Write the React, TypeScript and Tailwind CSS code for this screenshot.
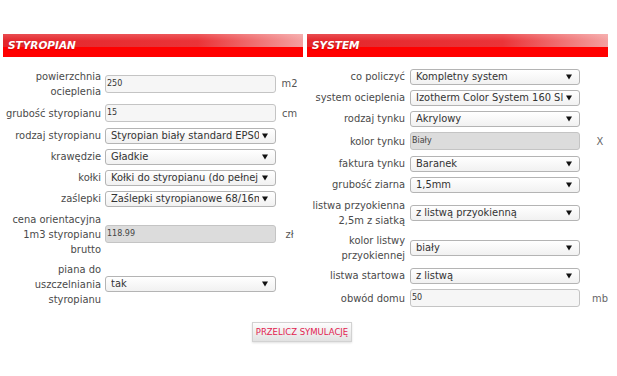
import React from "react";

type Side = "left" | "right";
type Kind = "select" | "input" | "text";

function Arrow() {
  return (
    <svg width="6" height="6" viewBox="0 0 6 6" className="shrink-0">
      <polygon points="0,0.5 6,0.5 3,5.5" fill="#111" />
    </svg>
  );
}

function Select({ value }: { value: string }) {
  return (
    <div className="flex h-[16px] w-full items-center rounded-[3px] border border-[#b4b4b4] bg-[linear-gradient(to_bottom,#ffffff,#f1f1f1)] pl-[5px] pr-[7px]">
      <span className="flex-1 overflow-hidden whitespace-nowrap text-[11px] leading-[14px] text-[#333] font-['DejaVu_Sans_Condensed','DejaVu_Sans',sans-serif]">
        {value}
      </span>
      <span className="ml-[3px] flex items-center">
        <Arrow />
      </span>
    </div>
  );
}

function Input({ value, disabled }: { value: string; disabled?: boolean }) {
  return (
    <div
      className={
        disabled
          ? "flex h-[18px] w-full items-center rounded-[3px] border border-[#c4c4c4] bg-[#dcdcdc] pl-[1px] text-[8px] text-[#444] font-['DejaVu_Sans',sans-serif]"
          : "flex h-[18px] w-full items-center rounded-[3px] border border-[#c4c4c4] bg-[#f6f6f6] pl-[1px] text-[8px] text-[#333] font-['DejaVu_Sans',sans-serif]"
      }
    >
      {value}
    </div>
  );
}

function Row({
  side,
  kind,
  label,
  unit,
  children,
}: {
  side: Side;
  kind: Kind;
  label: React.ReactNode;
  unit?: string;
  children: React.ReactNode;
}) {
  return (
    <div
      className={
        kind === "input"
          ? "flex min-h-[24px] items-center py-[2.5px]"
          : "flex min-h-[21px] items-center py-[2.5px]"
      }
    >
      <div className="w-[98px] shrink-0 text-right text-[11px] leading-[15px] text-[#4a4a4a]">
        {label}
      </div>
      <div className={side === "left" ? "ml-[4px] w-[171px] shrink-0" : "ml-[5px] w-[170px] shrink-0"}>
        {children}
      </div>
      <div
        className={
          side === "left"
            ? "w-[27px] shrink-0 text-center text-[11px] leading-[15px] text-[#555]"
            : "w-[40px] shrink-0 text-center text-[11px] leading-[15px] text-[#666]"
        }
      >
        {unit}
      </div>
    </div>
  );
}

function Header({ title }: { title: string }) {
  return (
    <div className="flex h-[23px] items-center pl-[5px] [background:linear-gradient(to_bottom,rgba(255,255,255,0.18),rgba(255,255,255,0)_30%),linear-gradient(to_bottom,transparent_56%,#ff0000_56%),linear-gradient(to_right,#e4262b_0%,#ea3438_65%,#f4a0a0_100%)]">
      <span className="text-[10.5px] font-bold italic leading-none text-white font-['DejaVu_Sans',sans-serif] [text-shadow:0_1px_1px_rgba(120,0,0,0.35)]">
        {title}
      </span>
    </div>
  );
}

export default function App() {
  return (
    <div className="h-[376px] w-[617px] bg-white pt-[34px] font-['DejaVu_Sans_Condensed','DejaVu_Sans',sans-serif]">
      <div className="flex">
        <div className="ml-[3px] w-[300px] shrink-0">
          <Header title="STYROPIAN" />
          <div className="mt-[9px]">
            <Row side="left" kind="input" label={<>powierzchnia<br />ocieplenia</>} unit="m2">
              <Input value="250" />
            </Row>
            <Row side="left" kind="input" label="grubość styropianu" unit="cm">
              <Input value="15" />
            </Row>
            <Row side="left" kind="select" label="rodzaj styropianu">
              <Select value="Styropian biały standard EPS0" />
            </Row>
            <Row side="left" kind="select" label="krawędzie">
              <Select value="Gładkie" />
            </Row>
            <Row side="left" kind="select" label="kołki">
              <Select value="Kołki do styropianu (do pełnej" />
            </Row>
            <Row side="left" kind="select" label="zaślepki">
              <Select value="Zaślepki styropianowe 68/16m" />
            </Row>
            <Row side="left" kind="input" label={<>cena orientacyjna<br />1m3 styropianu<br />brutto</>} unit="zł">
              <Input value="118.99" disabled />
            </Row>
            <Row side="left" kind="select" label={<>piana do<br />uszczelniania<br />styropianu</>}>
              <Select value="tak" />
            </Row>
          </div>
        </div>
        <div className="ml-[4px] w-[301px] shrink-0">
          <Header title="SYSTEM" />
          <div className="mt-[9px]">
            <Row side="right" kind="select" label="co policzyć">
              <Select value="Kompletny system" />
            </Row>
            <Row side="right" kind="select" label="system ocieplenia">
              <Select value="Izotherm Color System 160 Sl" />
            </Row>
            <Row side="right" kind="select" label="rodzaj tynku">
              <Select value="Akrylowy" />
            </Row>
            <Row side="right" kind="input" label="kolor tynku" unit="X">
              <Input value="Biały" disabled />
            </Row>
            <Row side="right" kind="select" label="faktura tynku">
              <Select value="Baranek" />
            </Row>
            <Row side="right" kind="select" label="grubość ziarna">
              <Select value="1,5mm" />
            </Row>
            <Row side="right" kind="select" label={<>listwa przyokienna<br />2,5m z siatką</>}>
              <Select value="z listwą przyokienną" />
            </Row>
            <Row side="right" kind="select" label={<>kolor listwy<br />przyokiennej</>}>
              <Select value="biały" />
            </Row>
            <Row side="right" kind="select" label="listwa startowa">
              <Select value="z listwą" />
            </Row>
            <Row side="right" kind="input" label="obwód domu" unit="mb">
              <Input value="50" />
            </Row>
          </div>
        </div>
      </div>
      <div className="mt-[12px] pl-[252px]">
        <div className="flex h-[20px] w-[100px] items-center justify-center border border-[#d2d2d2] bg-[linear-gradient(to_bottom,#fdfdfd,#e2e2e2)] text-[8.5px] text-[#e2224f] font-['DejaVu_Sans',sans-serif] shadow-[0_1px_2px_rgba(0,0,0,0.12)]">
          PRZELICZ SYMULACJĘ
        </div>
      </div>
    </div>
  );
}
